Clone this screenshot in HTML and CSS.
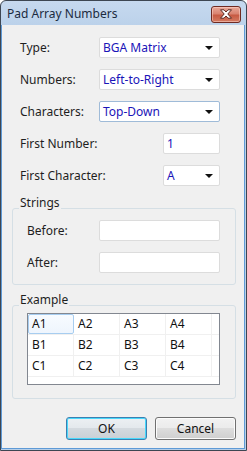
FILE: index.html
```html
<!DOCTYPE html>
<html lang="en">
<head>
    <meta charset="UTF-8">
    <meta name="viewport" content="width=device-width, initial-scale=1.0">
    <title>Pad Array Numbers</title>
    <link rel="stylesheet" href="styles.css">
</head>
<body>
    <div class="window">
        <div class="titlebar">
            <span class="title">Pad Array Numbers</span>
            <button class="close-btn" title="Close">
                <svg width="14" height="10" viewBox="0 0 14 10">
                    <path d="M1.5 0.8 L5 0.8 L7 3 L9 0.8 L12.5 0.8 L8.8 5 L12.5 9.2 L9 9.2 L7 7 L5 9.2 L1.5 9.2 L5.2 5 Z" fill="#fff" stroke="#5a2a22" stroke-width="1" stroke-linejoin="round"/>
                </svg>
            </button>
        </div>

        <div class="client">
            <div class="row">
                <span class="label">Type:</span>
                <div class="combo wide">BGA Matrix<span class="arrow"></span></div>
            </div>
            <div class="row">
                <span class="label">Numbers:</span>
                <div class="combo wide">Left-to-Right<span class="arrow"></span></div>
            </div>
            <div class="row">
                <span class="label">Characters:</span>
                <div class="combo wide focused">Top-Down<span class="arrow"></span></div>
            </div>
            <div class="row">
                <span class="label">First Number:</span>
                <div class="edit narrow">1</div>
            </div>
            <div class="row">
                <span class="label">First Character:</span>
                <div class="combo narrow">A<span class="arrow"></span></div>
            </div>

            <!-- Strings group -->
            <div class="group strings">
                <div class="group-title">Strings</div>
                <div class="row inner">
                    <span class="label">Before:</span>
                    <div class="edit wide"></div>
                </div>
                <div class="row inner">
                    <span class="label">After:</span>
                    <div class="edit wide"></div>
                </div>
            </div>

            <!-- Example group -->
            <div class="group example">
                <div class="group-title">Example</div>
                <div class="grid" id="exampleGrid"></div>
            </div>

            <div class="buttons">
                <button class="btn default">OK</button>
                <button class="btn">Cancel</button>
            </div>
        </div>
    </div>

    <script>
        // Fill the example grid: rows are characters, columns are numbers
        const chars = ['A', 'B', 'C'];
        const grid = document.getElementById('exampleGrid');
        chars.forEach((ch, r) => {
            const row = document.createElement('div');
            row.className = 'grid-row';
            for (let n = 1; n <= 4; n++) {
                const cell = document.createElement('div');
                cell.className = 'cell';
                if (r === 0 && n === 1) cell.classList.add('selected');
                cell.textContent = ch + n;
                row.appendChild(cell);
            }
            grid.appendChild(row);
        });
    </script>
</body>
</html>
```

FILE: styles.css
```css
* {
    box-sizing: border-box;
}
body {
    margin: 0;
    font-family: 'Noto Sans', 'Open Sans', sans-serif;
    font-size: 12px;
    color: #1e1e1e;
    background: #ffffff;
}
.window {
    width: 247px;
    height: 451px;
    border: 1px solid #3d4652;
    border-radius: 6px 6px 0 0;
    background: linear-gradient(#c6d9ef, #b9d0e9 30px, #b7cfe9);
    padding: 0 1px 1px 0;
    display: flex;
    flex-direction: column;
}
.titlebar {
    height: 24px;
    display: flex;
    align-items: center;
    justify-content: space-between;
    padding: 0 4px 0 6px;
}
.title {
    color: #1b2b3f;
    line-height: 14px;
    margin-top: 1px;
}
.close-btn {
    width: 30px;
    height: 17px;
    margin-top: 2px;
    padding: 0;
    border: 1px solid #6f2a22;
    border-radius: 3px;
    background: linear-gradient(#e9a899, #d98370 45%, #c75a43 55%, #d47b62);
    box-shadow: inset 0 0 0 1px rgba(255, 220, 210, 0.5);
    display: flex;
    align-items: center;
    justify-content: center;
}
.client {
    flex: 1;
    background: #f0f0f0;
    border: 1px solid #5e9ad6;
    border-top: none;
    padding: 12px 8px 0 10px;
    display: flex;
    flex-direction: column;
}
.row {
    height: 21px;
    display: flex;
    align-items: center;
    justify-content: space-between;
    padding: 0 16px 0 8px;
}
.row + .row {
    margin-top: 11px;
}
.label {
    line-height: 14px;
}
.combo, .edit {
    height: 21px;
    background: #ffffff;
    border: 1px solid #dcdcdc;
    border-radius: 2px;
    color: #1a14b8;
    padding-left: 3px;
    line-height: 19px;
    position: relative;
}
.combo.focused {
    border-color: #9fbbd8;
}
.wide {
    width: 121px;
}
.narrow {
    width: 57px;
}
.arrow {
    position: absolute;
    right: 6px;
    top: 8px;
    width: 0;
    height: 0;
    border-left: 4px solid transparent;
    border-right: 4px solid transparent;
    border-top: 4px solid #111111;
}
.group {
    border: 1px solid #d5dfe5;
    border-radius: 3px;
    display: flex;
    flex-direction: column;
}
.group-title {
    align-self: flex-start;
    margin: -13px 0 0 6px;
    padding: 0 1px;
    background: #f0f0f0;
    line-height: 14px;
}
.strings {
    margin-top: 22px;
    padding-bottom: 11px;
}
.strings .row {
    padding: 0 15px 0 14px;
}
.strings .group-title + .row {
    margin-top: 10px;
}
.example {
    margin-top: 20px;
    padding-bottom: 13px;
}
.grid {
    margin: 6px 15px 0 14px;
    height: 72px;
    border: 1px solid #828790;
    background: #ffffff;
}
.grid-row {
    display: flex;
    height: 21px;
    border-bottom: 1px solid #f0f0f0;
}
.cell {
    width: 46px;
    border-right: 1px solid #f0f0f0;
    padding-left: 4px;
    line-height: 20px;
    color: #111111;
}
.cell.selected {
    border: 1px solid #a7cdf0;
    border-radius: 2px;
    background: linear-gradient(#f7fbff, #eef5fd);
    padding-left: 3px;
    line-height: 18px;
}
.buttons {
    margin-top: 18px;
    display: flex;
    justify-content: flex-end;
    gap: 8px;
}
.btn {
    width: 81px;
    height: 23px;
    font-family: inherit;
    font-size: 12px;
    color: #111111;
    border: 1px solid #707070;
    border-radius: 3px;
    background: linear-gradient(#f2f2f2, #ebebeb 50%, #dddddd 50%, #cfcfcf);
    box-shadow: inset 0 0 0 1px #fcfcfc;
    padding: 0;
}
.btn.default {
    border-color: #3c7fb1;
    box-shadow: inset 0 0 0 1px #48d8fb;
    background: linear-gradient(#ecf0f3, #e3e8ec 50%, #d4dadf 50%, #c9d0d6);
}
```
